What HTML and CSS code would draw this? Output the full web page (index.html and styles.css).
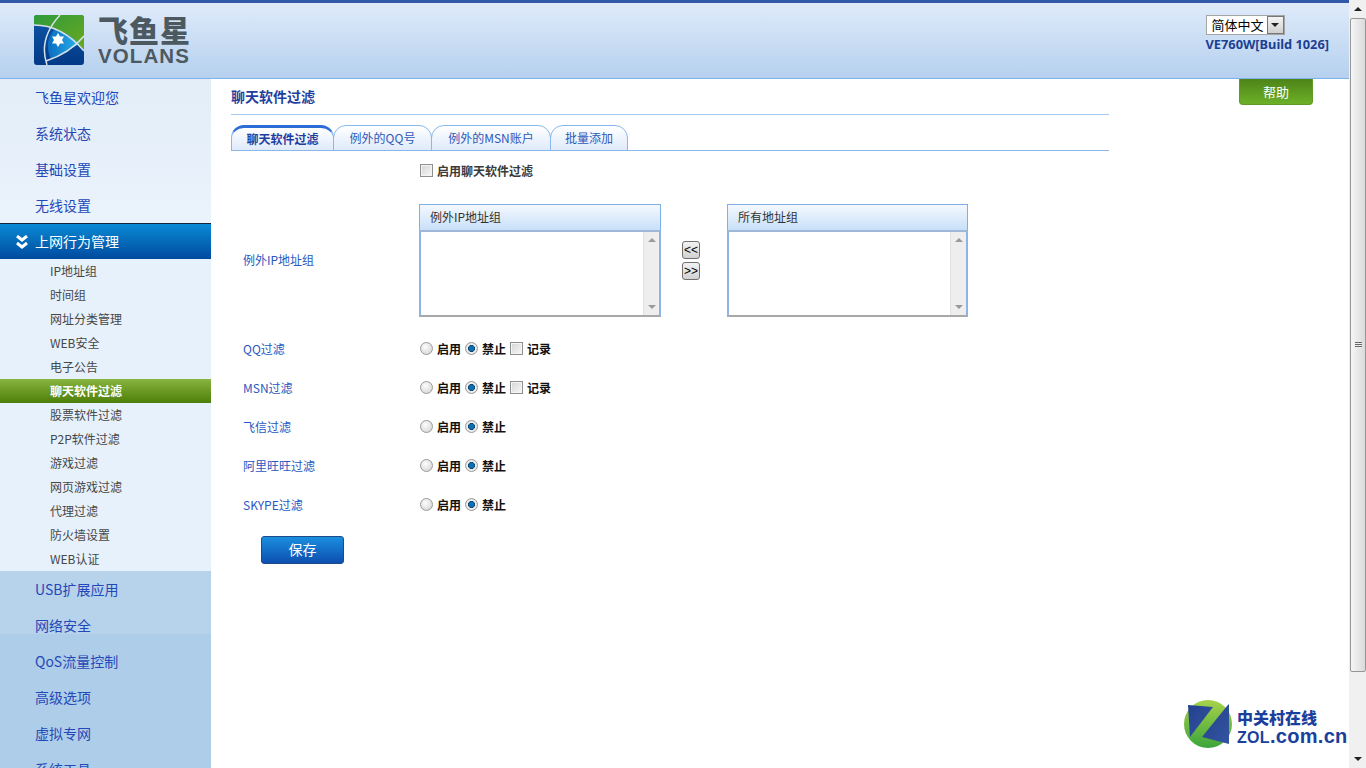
FILE: index.html
```html
<!DOCTYPE html>
<html lang="zh-CN">
<head>
<meta charset="utf-8">
<title>聊天软件过滤</title>
<link rel="stylesheet" href="styles.css">
</head>
<body>
<div class="page">
  <header class="top">
    <div class="logo">
      <svg class="logo-mark" viewBox="0 0 50 50" width="50" height="50" aria-hidden="true">
        <defs>
          <linearGradient id="g1" x1="0" y1="0" x2="1" y2="1"><stop offset="0" stop-color="#2f9a3c"/><stop offset="1" stop-color="#6aa91f"/></linearGradient>
          <linearGradient id="b1" x1="0" y1="0" x2="0" y2="1"><stop offset="0" stop-color="#0f55a8"/><stop offset="1" stop-color="#023a86"/></linearGradient>
          <linearGradient id="l1" x1="0" y1="0" x2="1" y2="0"><stop offset="0" stop-color="#0a6cc0"/><stop offset="1" stop-color="#2ab2ea"/></linearGradient>
          <clipPath id="rc"><rect width="50" height="50" rx="3"/></clipPath>
        </defs>
        <g clip-path="url(#rc)">
          <rect width="50" height="50" fill="url(#b1)"/>
          <path d="M0 0H50V35Q30 12 0 10Z" fill="url(#g1)"/>
          <path d="M14 28Q15 20 21 14Q35 18 45 29Q30 38 17 44Q13 36 14 28Z" fill="url(#l1)"/>
          <path d="M0 10Q28 10 50 36M26 0Q4 24 13 50M50 21Q36 38 12 46" fill="none" stroke="#d5e0e8" stroke-width="1.5"/>
          <path d="M24 18l2 3.5h4l-2 3.5 2 3.5h-4l-2 3.5-2-3.500h-4l2-3.500-2-3.500h4z" fill="#fff"/>
        </g>
      </svg>
      <div class="logo-text">
        <div class="logo-cn">飞鱼星</div>
        <div class="logo-en">VOLANS</div>
      </div>
    </div>
    <div class="top-right">
      <div class="lang"><span class="lang-text">简体中文</span><span class="lang-btn"><i class="tri-down dark"></i></span></div>
      <div class="build">VE760W[Build 1026]</div>
    </div>
  </header>
  <div class="body">
    <nav class="side">
      <a class="nav">飞鱼星欢迎您</a>
      <a class="nav">系统状态</a>
      <a class="nav">基础设置</a>
      <a class="nav">无线设置</a>
      <a class="nav active"><svg class="chev" viewBox="0 0 12 14" width="12" height="14" aria-hidden="true"><path d="M1 1l5 4 5-4M1 8l5 4 5-4" fill="none" stroke="#fff" stroke-width="3"/></svg>上网行为管理</a>
      <div class="subs">
        <a class="sub">IP地址组</a>
        <a class="sub">时间组</a>
        <a class="sub">网址分类管理</a>
        <a class="sub">WEB安全</a>
        <a class="sub">电子公告</a>
        <a class="sub current">聊天软件过滤</a>
        <a class="sub">股票软件过滤</a>
        <a class="sub">P2P软件过滤</a>
        <a class="sub">游戏过滤</a>
        <a class="sub">网页游戏过滤</a>
        <a class="sub">代理过滤</a>
        <a class="sub">防火墙设置</a>
        <a class="sub">WEB认证</a>
      </div>
      <a class="nav low light">USB扩展应用</a>
      <a class="nav low light2">网络安全</a>
      <a class="nav low">QoS流量控制</a>
      <a class="nav low">高级选项</a>
      <a class="nav low">虚拟专网</a>
      <a class="nav low">系统工具</a>
    </nav>
    <main class="main">
      <div class="content">
        <h1 class="title">聊天软件过滤</h1>
        <div class="tabs">
          <a class="tab on t1">聊天软件过滤</a>
          <a class="tab t2">例外的QQ号</a>
          <a class="tab t3">例外的MSN账户</a>
          <a class="tab t4">批量添加</a>
        </div>
        <form class="form">
          <div class="row check-row">
            <span></span>
            <label class="opt"><input type="checkbox" class="cb">启用聊天软件过滤</label>
          </div>
          <div class="row panels-row">
            <span class="lbl">例外IP地址组</span>
            <div class="panels">
              <div class="panel p1">
                <div class="panel-head">例外IP地址组</div>
                <div class="panel-body"><div class="vbar"><i class="tri-up"></i><i class="tri-down"></i></div></div>
              </div>
              <div class="moves">
                <button type="button" class="move">&lt;&lt;</button>
                <button type="button" class="move">&gt;&gt;</button>
              </div>
              <div class="panel p2">
                <div class="panel-head">所有地址组</div>
                <div class="panel-body"><div class="vbar"><i class="tri-up"></i><i class="tri-down"></i></div></div>
              </div>
            </div>
          </div>
          <div class="row radio-row first">
            <span class="lbl">QQ过滤</span>
            <div class="opts">
              <label class="opt"><input type="radio" class="rb" name="qq">启用</label>
              <label class="opt"><input type="radio" class="rb" name="qq" checked>禁止</label>
              <label class="opt"><input type="checkbox" class="cb">记录</label>
            </div>
          </div>
          <div class="row radio-row">
            <span class="lbl">MSN过滤</span>
            <div class="opts">
              <label class="opt"><input type="radio" class="rb" name="msn">启用</label>
              <label class="opt"><input type="radio" class="rb" name="msn" checked>禁止</label>
              <label class="opt"><input type="checkbox" class="cb">记录</label>
            </div>
          </div>
          <div class="row radio-row">
            <span class="lbl">飞信过滤</span>
            <div class="opts">
              <label class="opt"><input type="radio" class="rb" name="fx">启用</label>
              <label class="opt"><input type="radio" class="rb" name="fx" checked>禁止</label>
            </div>
          </div>
          <div class="row radio-row">
            <span class="lbl">阿里旺旺过滤</span>
            <div class="opts">
              <label class="opt"><input type="radio" class="rb" name="ali">启用</label>
              <label class="opt"><input type="radio" class="rb" name="ali" checked>禁止</label>
            </div>
          </div>
          <div class="row radio-row">
            <span class="lbl">SKYPE过滤</span>
            <div class="opts">
              <label class="opt"><input type="radio" class="rb" name="sk">启用</label>
              <label class="opt"><input type="radio" class="rb" name="sk" checked>禁止</label>
            </div>
          </div>
          <button type="button" class="save">保存</button>
        </form>
      </div>
      <a class="help">帮助</a>
    </main>
  </div>
</div>
<div class="scroll">
  <div class="sb-btn"><i class="tri-up dark"></i></div>
  <div class="sb-thumb"><span class="grip"></span></div>
  <div class="sb-track"></div>
  <div class="sb-btn"><i class="tri-down dark"></i></div>
</div>
<div class="zol">
  <svg viewBox="0 0 50 50" width="50" height="50" aria-hidden="true">
    <defs>
      <linearGradient id="zg" x1="0" y1="0" x2="0" y2="1"><stop offset="0" stop-color="#a8d24a"/><stop offset="1" stop-color="#3ba53a"/></linearGradient>
      <linearGradient id="zb" x1="0" y1="0" x2="1" y2="1"><stop offset="0" stop-color="#24408f"/><stop offset="1" stop-color="#33559f"/></linearGradient>
    </defs>
    <circle cx="24" cy="25" r="24" fill="url(#zg)"/>
    <path d="M4 6L29 8L6 38Z" fill="url(#zb)"/>
    <path d="M45 5V45L18 38L43 7Z" fill="url(#zb)"/>
  </svg>
  <div class="zol-text">
    <div class="zol-cn">中关村在线</div>
    <div class="zol-en"><span class="zol-caps">ZOL</span>.com.cn</div>
  </div>
</div>
</body>
</html>
```

FILE: styles.css
```css
* { box-sizing: border-box; }
html, body { margin: 0; height: 100%; }
body {
  display: flex;
  height: 768px;
  overflow: hidden;
  background: #fff;
  font-family: "Noto Sans CJK SC", "Noto Sans", sans-serif;
  font-size: 12px;
  position: relative;
}
.page { flex: 1; min-width: 0; display: flex; flex-direction: column; }

/* header */
.top {
  height: 79px;
  flex: none;
  border-top: 3px solid #3259a8;
  border-bottom: 1px solid #7fb2ea;
  background: linear-gradient(#dfebfa, #b5d0ee);
  display: flex;
  justify-content: space-between;
  padding: 12px 20px 0 34px;
}
.logo { display: flex; gap: 14px; align-items: flex-start; }
.logo-text { width: 92px; margin-top: -3px; }
.logo-cn {
  font-size: 30px;
  line-height: 34px;
  font-weight: 900;
  color: #4d5961;
  letter-spacing: 1px;
  white-space: nowrap;
}
.logo-en {
  font-family: "Liberation Sans", sans-serif;
  font-size: 20.500px;
  line-height: 20px;
  font-weight: 700;
  color: #4d5961;
  letter-spacing: 1.100px;
}
.top-right { display: flex; flex-direction: column; align-items: flex-start; }
.lang {
  width: 79px;
  height: 20px;
  display: flex;
  background: #fff;
  border: 1px solid #a5a5a5;
}
.lang-text { flex: 1; font-size: 13px; line-height: 18px; padding-left: 5px; color: #000; white-space: nowrap; }
.lang-btn {
  width: 17px;
  background: linear-gradient(#f4f4f4, #cfcfcf);
  border: 1px solid #777;
  display: flex;
  align-items: center;
  justify-content: center;
}
.build {
  font-family: "Noto Sans", sans-serif;
  font-size: 12.800px;
  line-height: 14px;
  font-weight: 700;
  color: #1c3f93;
  white-space: nowrap;
  margin-top: 2px;
}
.tri-down, .tri-up {
  display: block;
  width: 0;
  height: 0;
  border-left: 4px solid transparent;
  border-right: 4px solid transparent;
}
.tri-down { border-top: 4px solid #9a9a9a; }
.tri-up { border-bottom: 4px solid #9a9a9a; }
.tri-down.dark { border-top-color: #222; }
.tri-up.dark { border-bottom-color: #222; }

.body { flex: 1; min-height: 0; display: flex; }

/* sidebar */
.side {
  width: 211px;
  flex: none;
  background: linear-gradient(#e2edf8, #ebf3fc) 0 0 / 100% 144px no-repeat, #e8f1fb;
  overflow: hidden;
}
.nav {
  display: flex;
  align-items: center;
  height: 36px;
  padding-left: 35px;
  font-size: 14px;
  color: #2548b8;
  white-space: nowrap;
}
.nav.active {
  position: relative;
  color: #fff;
  padding-bottom: 2px;
  background: linear-gradient(#0a8ad4, #004a9e);
  border-top: 1px solid #10253f;
}
.chev { position: absolute; left: 16px; top: 11px; }
.nav.low { background: #aecde8; }
.nav.low.light { background: #b7d2eb; }
.nav.low.light2 { background: linear-gradient(#b7d2eb 27px, #aecde8 27px); }
.subs { background: #e6f1fc; }
.sub {
  display: flex;
  align-items: center;
  height: 24px;
  padding: 0 0 2px 50px;
  color: #474747;
  white-space: nowrap;
}
.sub.current {
  color: #fff;
  font-weight: 700;
  background: linear-gradient(#88b440, #4d7f07);
}

/* main */
.main { flex: 1; min-width: 0; display: flex; padding-left: 20px; }
.content { width: 878px; flex: none; }
.title {
  margin: 0;
  height: 36px;
  border-bottom: 1px solid #a6c9ef;
  font-size: 14px;
  line-height: 35px;
  font-weight: 700;
  color: #1f3fa0;
}
.tabs {
  display: flex;
  height: 26px;
  margin-top: 10px;
  border-bottom: 1px solid #8ab8ec;
}
.tab {
  height: 26px;
  display: flex;
  align-items: center;
  justify-content: center;
  padding-bottom: 1px;
  border: 1px solid #8ab8ec;
  border-radius: 13px 13px 0 0;
  background: linear-gradient(#fff, #dfeafa);
  color: #2f58bb;
  white-space: nowrap;
  margin-right: -1px;
}
.tab.on {
  color: #1f3fa0;
  font-weight: 700;
  padding-bottom: 1px;
  border-top: 3px solid #2b6cd6;
}
.t1 { width: 103px; }
.t2 { width: 99px; }
.t3 { width: 120px; }
.t4 { width: 78px; }

.form { padding-top: 10px; }
.row { display: grid; grid-template-columns: 188px 1fr; align-items: center; }
.lbl { padding: 0 0 2px 12px; color: #2a58c0; white-space: nowrap; }
.check-row { height: 20px; }
.panels-row { margin-top: 23px; }
.radio-row { height: 39px; }
.radio-row.first { margin-top: 13px; }
.opts { display: flex; gap: 3px; }
.opt {
  display: inline-flex;
  align-items: center;
  padding-bottom: 2px;
  font-weight: 700;
  color: #111;
  white-space: nowrap;
}
.check-row .opt { color: #3a3a3a; }
.cb, .rb {
  appearance: none;
  -webkit-appearance: none;
  margin: 0 4px 0 1px;
  width: 13px;
  height: 13px;
  flex: none;
}
.cb {
  border: 1px solid #8e8f8f;
  background: linear-gradient(135deg, #d4d4d4, #f8f8f8);
  box-shadow: inset 0 0 0 1px #f4f4f4;
}
.rb {
  border: 1px solid #9a9a9a;
  border-radius: 50%;
  background: radial-gradient(circle at 40% 35%, #fdfdfd, #cfcfcf);
}
.rb:checked {
  background: radial-gradient(circle, #0d6fb3 0 2.600px, #0b3f68 3.200px, #f2f2f2 3.800px, #cfcfcf 100%);
}

.panels { display: flex; }
.panel { height: 113px; display: flex; flex-direction: column; }
.p1 { width: 242px; }
.p2 { width: 241px; }
.panel-head {
  height: 26px;
  flex: none;
  padding-left: 10px;
  line-height: 23px;
  color: #333;
  background: linear-gradient(#f4f8fe, #c8e0f9);
  border: 1px solid #7dafe8;
  border-bottom: 0;
}
.panel-body {
  flex: 1;
  display: flex;
  justify-content: flex-end;
  background: #fff;
  border: 2px solid #8db4e6;
  border-bottom-color: #a8a8a8;
  border-top-color: #a0b8d8;
}
.vbar {
  width: 16px;
  background: #eee;
  border-left: 1px solid #e2e2e2;
  display: flex;
  flex-direction: column;
  justify-content: space-between;
  align-items: center;
  padding: 6px 0;
}
.moves {
  width: 66px;
  flex: none;
  display: flex;
  flex-direction: column;
  align-items: center;
  gap: 3px;
  padding: 37px 6px 0 0;
}
.move {
  width: 18px;
  height: 18px;
  padding: 0;
  border: 1px solid #707070;
  border-radius: 3px;
  background: linear-gradient(#f2f2f2, #d2d2d2);
  font-family: "Liberation Sans", sans-serif;
  font-size: 12px;
  line-height: 14px;
  color: #000;
}
.save {
  display: block;
  width: 83px;
  height: 28px;
  margin: 11px 0 0 30px;
  padding: 0 0 2px;
  border: 1px solid #1f4a8a;
  border-radius: 3px;
  background: linear-gradient(#1a8ede, #0d4fb0);
  color: #fff;
  font-family: inherit;
  font-size: 14px;
}
.help {
  width: 74px;
  height: 26px;
  margin-left: 130px;
  flex: none;
  text-align: center;
  line-height: 25px;
  font-size: 13px;
  color: #fff;
  background: linear-gradient(#4e8419, #6cb027);
  border: 1px solid #5f9a24;
  border-top: 0;
  border-radius: 0 0 4px 4px;
}

/* page scrollbar */
.scroll {
  width: 17px;
  flex: none;
  height: 768px;
  background: #f0f0f0;
  display: flex;
  flex-direction: column;
}
.sb-btn { height: 18px; flex: none; display: flex; align-items: center; justify-content: center; }
.sb-thumb {
  height: 654px;
  flex: none;
  margin-left: 1px;
  border: 1px solid #979797;
  border-radius: 2px;
  background: linear-gradient(90deg, #f6f6f6, #dadada);
  display: flex;
  align-items: center;
  justify-content: center;
}
.grip {
  width: 7px;
  height: 6px;
  background: repeating-linear-gradient(#666 0 1px, #eee 1px 2px);
}
.sb-track { flex: 1; }

/* watermark over the page */
.zol {
  position: absolute;
  left: 1184px;
  top: 699px;
  display: flex;
  gap: 3px;
  align-items: flex-start;
}
.zol-text { color: #1a3f9c; margin-top: 9px; }
.zol-cn { font-size: 16px; line-height: 18px; font-weight: 900; white-space: nowrap; }
.zol-en {
  font-family: "Liberation Sans", sans-serif;
  font-size: 20px;
  line-height: 20px;
  font-weight: 700;
  letter-spacing: 0.300px;
  white-space: nowrap;
}
.zol-caps { font-size: 16px; }
```
